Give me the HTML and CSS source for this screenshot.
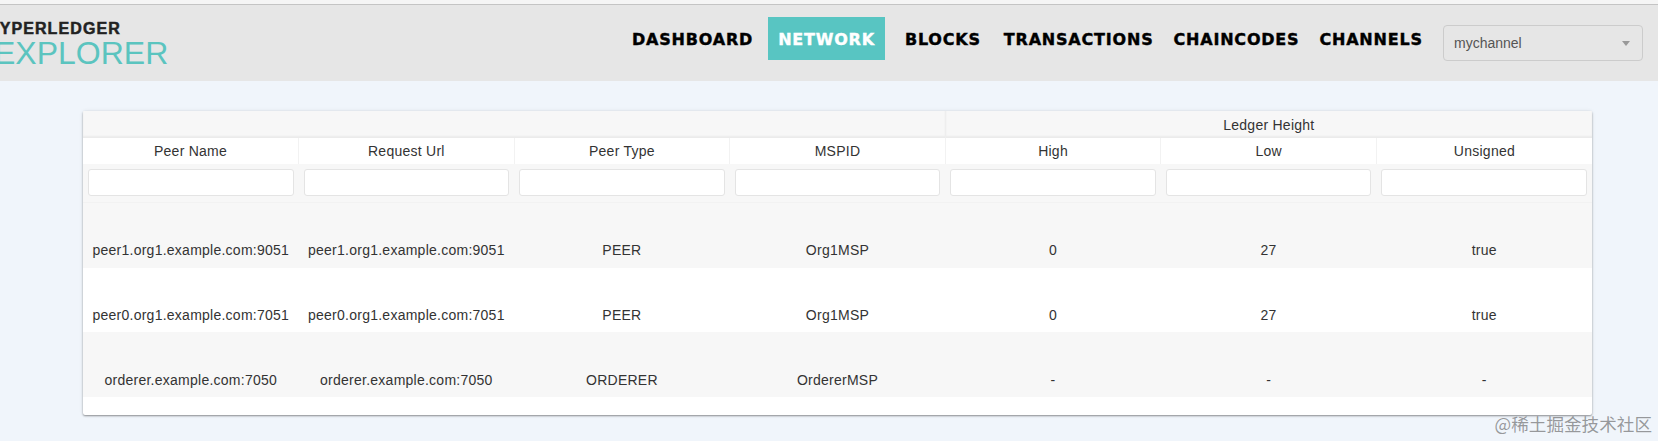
FILE: index.html
```html
<!DOCTYPE html>
<html lang="en">
<head>
    <meta charset="UTF-8">
    <meta name="viewport" content="width=device-width, initial-scale=1.0">
    <title>Hyperledger Explorer</title>
    <link rel="stylesheet" href="styles.css">
</head>
<body>
    <header class="top-bar">
        <div class="logo">
            <div class="logo-top">HYPERLEDGER</div>
            <div class="logo-bottom">EXPLORER</div>
        </div>
        <nav class="nav">
            <a class="nav-link">DASHBOARD</a>
            <a class="nav-link active">NETWORK</a>
            <a class="nav-link">BLOCKS</a>
            <a class="nav-link">TRANSACTIONS</a>
            <a class="nav-link">CHAINCODES</a>
            <a class="nav-link">CHANNELS</a>
        </nav>
        <div class="channel-select">
            <span>mychannel</span>
            <span class="arrow"></span>
        </div>
    </header>
    <main class="content">
        <div class="table-card">
            <table class="peer-table">
                <thead>
                    <tr class="group-row">
                        <th colspan="4"></th>
                        <th colspan="3" class="group-cell">Ledger Height</th>
                    </tr>
                    <tr class="head-row">
                        <th>Peer Name</th>
                        <th>Request Url</th>
                        <th>Peer Type</th>
                        <th>MSPID</th>
                        <th>High</th>
                        <th>Low</th>
                        <th>Unsigned</th>
                    </tr>
                    <tr class="filter-row">
                        <th><input type="text"></th>
                        <th><input type="text"></th>
                        <th><input type="text"></th>
                        <th><input type="text"></th>
                        <th><input type="text"></th>
                        <th><input type="text"></th>
                        <th><input type="text"></th>
                    </tr>
                </thead>
                <tbody>
                    <tr class="odd">
                        <td>peer1.org1.example.com:9051</td>
                        <td>peer1.org1.example.com:9051</td>
                        <td>PEER</td>
                        <td>Org1MSP</td>
                        <td>0</td>
                        <td>27</td>
                        <td>true</td>
                    </tr>
                    <tr>
                        <td>peer0.org1.example.com:7051</td>
                        <td>peer0.org1.example.com:7051</td>
                        <td>PEER</td>
                        <td>Org1MSP</td>
                        <td>0</td>
                        <td>27</td>
                        <td>true</td>
                    </tr>
                    <tr class="odd">
                        <td>orderer.example.com:7050</td>
                        <td>orderer.example.com:7050</td>
                        <td>ORDERER</td>
                        <td>OrdererMSP</td>
                        <td>-</td>
                        <td>-</td>
                        <td>-</td>
                    </tr>
                </tbody>
            </table>
        </div>
    </main>
    <div class="watermark">@稀土掘金技术社区</div>
</body>
</html>
```

FILE: styles.css
```css
* {
    box-sizing: border-box;
}

html, body {
    height: 100%;
}

body {
    margin: 0;
    border-top: 4px solid #f5f5f5;
    background-color: #f0f5fb;
    font-family: "Liberation Sans", Arial, sans-serif;
    color: #333;
    overflow: hidden;
    position: relative;
}

.top-bar {
    display: flex;
    align-items: flex-start;
    height: 77px;
    background-color: #e6e6e6;
    border-top: 1px solid #c4c4c4;
    overflow: hidden;
}

.logo {
    flex: none;
    width: 588px;
    padding-top: 15px;
}

.logo-top {
    margin-left: -13px;
    font-size: 16px;
    line-height: 18px;
    font-weight: bold;
    letter-spacing: 1.1px;
    white-space: nowrap;
    color: #222;
    -webkit-text-stroke: 0.5px #222;
}

.logo-bottom {
    margin-left: -6px;
    font-size: 32px;
    line-height: 31px;
    white-space: nowrap;
    color: #5bc4bf;
}

.nav {
    display: flex;
    margin-left: 34px;
    padding-top: 12px;
}

.nav-link {
    display: block;
    height: 43px;
    padding: 0 10px;
    line-height: 45px;
    font-family: "DejaVu Sans", sans-serif;
    font-size: 16px;
    font-weight: bold;
    letter-spacing: 0.8px;
    white-space: nowrap;
    color: #000;
    -webkit-text-stroke: 0.4px currentColor;
}

.nav-link.active {
    background-color: #58c5c2;
    color: #fff;
    margin: 0 10px 0 5px;
}

.nav-link.active + .nav-link {
    margin-right: 3px;
}

.channel-select {
    flex: none;
    display: flex;
    align-items: center;
    justify-content: space-between;
    width: 200px;
    height: 36px;
    margin-top: 20px;
    margin-left: auto;
    margin-right: 15px;
    padding: 0 12px 0 10px;
    border: 1px solid #ccc;
    border-radius: 4px;
    font-size: 14px;
    color: #555;
}

.arrow {
    width: 0;
    height: 0;
    border-left: 4px solid transparent;
    border-right: 4px solid transparent;
    border-top: 5px solid #999;
}

.content {
    padding: 30px 66px 0 83px;
}

.table-card {
    height: 304px;
    background-color: #fff;
    border-radius: 2px;
    box-shadow: 0 1px 2px rgba(0, 0, 0, 0.4), 0 0 4px rgba(0, 0, 0, 0.08);
}

.peer-table {
    width: 100%;
    border-collapse: collapse;
    table-layout: fixed;
    font-size: 14px;
    letter-spacing: 0.25px;
    text-align: center;
}

.peer-table th {
    font-weight: normal;
    padding: 0;
}

.group-row th {
    height: 27px;
    background-color: #f7f7f7;
    box-shadow: inset 0 -2px 2px rgba(0, 0, 0, 0.05);
}

.group-row .group-cell {
    border-left: 1px solid #eee;
}

.head-row th {
    height: 26px;
    background-color: #fff;
    border-left: 1px solid #f2f2f2;
}

.head-row th:first-child {
    border-left: none;
}

.filter-row th {
    height: 38px;
    padding: 0 5px;
    background-color: #f7f7f7;
    border-bottom: 1px solid #f2f2f2;
}

.filter-row input {
    display: block;
    width: 100%;
    height: 27px;
    background-color: #fff;
    border: 1px solid #e4e4e4;
    border-radius: 3px;
}

.peer-table td {
    height: 64px;
    padding: 30px 0 0;
    white-space: nowrap;
}

.peer-table tr:first-child td {
    height: 66px;
}

.peer-table tr:last-child td {
    height: 65px;
}

.peer-table tr.odd td {
    background-color: #f7f7f7;
}

.watermark {
    position: absolute;
    right: 6px;
    bottom: 7px;
    font-family: "Noto Sans CJK SC", sans-serif;
    font-size: 17.6px;
    line-height: 20px;
    color: rgba(90, 90, 90, 0.6);
}
```
